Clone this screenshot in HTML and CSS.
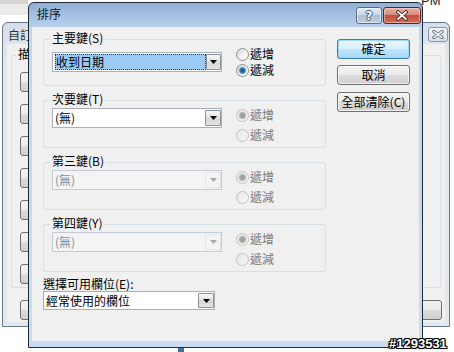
FILE: index.html
```html
<!DOCTYPE html>
<html lang="zh-Hant">
<head>
<meta charset="utf-8">
<title>排序</title>
<link rel="stylesheet" href="styles.css">
</head>
<body>
<div class="screen">
  <div class="topstrip"></div>
  <div class="pm">PM</div>
  <div class="taskbit"></div>

  <div class="bgwin">
    <div class="bg-titlebar">
      <span class="bg-title">自訂檢視</span>
      <span class="bg-close">
        <svg width="12" height="9" viewBox="0 0 12 9"><path d="M2 1.5L10 7.5M10 1.5L2 7.5" stroke="#4a5564" stroke-width="3.2" stroke-linecap="round"/><path d="M2 1.5L10 7.5M10 1.5L2 7.5" stroke="#f4f6f8" stroke-width="1.6" stroke-linecap="round"/></svg>
      </span>
    </div>
    <div class="bg-client">
      <div class="bg-group">
        <span class="bg-legend">描述</span>
        <span class="bg-btn"></span>
        <span class="bg-btn"></span>
        <span class="bg-btn"></span>
        <span class="bg-btn"></span>
        <span class="bg-btn"></span>
        <span class="bg-btn"></span>
        <span class="bg-btn"></span>
      </div>
      <div class="bg-foot">
        <span class="bg-btn"></span>
        <span class="bg-btn wide"></span>
      </div>
    </div>
  </div>

  <div class="dialog">
    <div class="titlebar">
      <span class="title">排序</span>
      <div class="caps">
        <span class="cap help">?</span>
        <span class="cap close">
          <svg width="14" height="11" viewBox="0 0 14 11"><path d="M3 2L11 9M11 2L3 9" stroke="#3b1410" stroke-width="3.6" stroke-linecap="round"/><path d="M3 2L11 9M11 2L3 9" stroke="#ffffff" stroke-width="1.9" stroke-linecap="round"/></svg>
        </span>
      </div>
    </div>
    <div class="client">
      <div class="keys">
        <div class="group first">
          <span class="legend">主要鍵(S)</span>
          <div class="combo">
            <span class="val"><span class="sel">收到日期</span></span>
            <span class="drop"><svg width="7" height="4" viewBox="0 0 7 4"><path d="M0 0H7L3.5 4Z" fill="#000"/></svg></span>
          </div>
          <div class="radios">
            <div class="radio"><span class="dot"></span><span>遞增</span></div>
            <div class="radio"><span class="dot on"></span><span>遞減</span></div>
          </div>
        </div>

        <div class="group">
          <span class="legend">次要鍵(T)</span>
          <div class="combo">
            <span class="val">(無)</span>
            <span class="drop"><svg width="7" height="4" viewBox="0 0 7 4"><path d="M0 0H7L3.5 4Z" fill="#000"/></svg></span>
          </div>
          <div class="radios">
            <div class="radio dis"><span class="dot on"></span><span>遞增</span></div>
            <div class="radio dis"><span class="dot"></span><span>遞減</span></div>
          </div>
        </div>

        <div class="group">
          <span class="legend">第三鍵(B)</span>
          <div class="combo dis">
            <span class="val">(無)</span>
            <span class="drop"><svg width="7" height="4" viewBox="0 0 7 4"><path d="M0 0H7L3.5 4Z" fill="#a9a9a9"/></svg></span>
          </div>
          <div class="radios">
            <div class="radio dis"><span class="dot on"></span><span>遞增</span></div>
            <div class="radio dis"><span class="dot"></span><span>遞減</span></div>
          </div>
        </div>

        <div class="group">
          <span class="legend">第四鍵(Y)</span>
          <div class="combo dis">
            <span class="val">(無)</span>
            <span class="drop"><svg width="7" height="4" viewBox="0 0 7 4"><path d="M0 0H7L3.5 4Z" fill="#a9a9a9"/></svg></span>
          </div>
          <div class="radios">
            <div class="radio dis"><span class="dot on"></span><span>遞增</span></div>
            <div class="radio dis"><span class="dot"></span><span>遞減</span></div>
          </div>
        </div>

        <div class="fields-label">選擇可用欄位(E):</div>
        <div class="combo wide">
          <span class="val">經常使用的欄位</span>
          <span class="drop"><svg width="7" height="4" viewBox="0 0 7 4"><path d="M0 0H7L3.5 4Z" fill="#000"/></svg></span>
        </div>
      </div>

      <div class="buttons">
        <span class="btn default">確定</span>
        <span class="btn">取消</span>
        <span class="btn third">全部清除(C)</span>
      </div>
    </div>
  </div>

  <div class="watermark">#1293531</div>
</div>
</body>
</html>
```

FILE: styles.css
```css
* { box-sizing: border-box; }
html, body { margin: 0; padding: 0; }
body {
  width: 454px;
  height: 352px;
  overflow: hidden;
  background: #ffffff;
  font-family: "Noto Sans CJK TC", "Liberation Sans", sans-serif;
  font-size: 12px;
  line-height: 14px;
  color: #000;
}
.screen { position: relative; width: 454px; height: 352px; overflow: hidden; }

/* background desktop bits */
.topstrip {
  position: absolute; left: 0; top: 0; width: 28px; height: 15px;
  background: linear-gradient(#d4d4d4 0 4px, #ebebeb 4px);
}
.pm {
  position: absolute; left: 421px; top: -6px;
  font: 13px/14px "Liberation Sans", sans-serif; color: #222;
}
.taskbit {
  position: absolute; left: 178px; top: 347px; width: 6px; height: 5px;
  background: #4a6d9c;
}

/* background window */
.bgwin {
  position: absolute; left: 2px; top: 22px; width: 448px; height: 305px;
  border: 1px solid #69778a; border-radius: 6px 6px 0 0;
  background: linear-gradient(#d5dfeb, #e2e8ef 40px, #e2e8ef);
  display: flex; flex-direction: column;
}
.bg-titlebar {
  height: 21px; display: flex; justify-content: space-between; align-items: flex-start;
  padding: 0 1px 0 5px;
}
.bg-title { padding-top: 5px; color: #333; }
.bg-close {
  margin-top: 4px; width: 20px; height: 15px;
  border: 1px solid #8a96a6; border-radius: 3px;
  background: linear-gradient(#f3f6f9, #d6dee7);
  display: flex; align-items: center; justify-content: center;
}
.bg-client {
  flex: 1; margin: 0 4px 4px; background: #f0f0f0;
  padding: 11px 0 0 4px;
}
.bg-group {
  position: relative; height: 233px; margin-right: 4px;
  border: 1px solid #d5dfe5; border-radius: 3px;
  padding: 16px 0 0 8px;
  display: flex; flex-direction: column; gap: 12px;
}
.bg-legend { position: absolute; top: -9px; left: 4px; padding: 0 2px; background: #f0f0f0; }
.bg-btn {
  display: block; width: 60px; height: 20px;
  border: 1px solid #707070; border-radius: 3px;
  background: linear-gradient(#f2f2f2, #ebebeb 50%, #dddddd 50%, #cfcfcf);
}
.bg-btn.wide { width: 75px; }
.bg-foot { display: flex; justify-content: space-between; padding: 12px 3px 0 9px; }

/* dialog */
.dialog {
  position: absolute; left: 28px; top: 2px; width: 395px; height: 346px;
  border: 1px solid #1f2a36; border-radius: 6px 6px 0 0;
  background: linear-gradient(#91afd5, #b8d0ec 24px, #c2d7ee 24px, #cadcf0);
  display: flex; flex-direction: column;
  padding: 0 3px 6px;
}
.titlebar {
  height: 24px; display: flex; justify-content: space-between; align-items: flex-start;
}
.title { padding: 4px 0 0 5px; color: #111; }
.caps { display: flex; gap: 1px; margin-top: 4px; margin-right: -2px; }
.cap {
  height: 17px; border-radius: 3px;
  display: flex; align-items: center; justify-content: center;
}
.help {
  width: 26px; border: 1px solid #5a6e88;
  background: linear-gradient(#e3ebf5, #c5d5e8 50%, #aebfd6 50%, #bccde2);
  box-shadow: inset 0 0 0 1px rgba(255,255,255,.55);
  font: bold 12px/12px "DejaVu Sans", sans-serif; color: #fff;
  text-shadow: 1px 0 #4a5668, -1px 0 #4a5668, 0 1px #4a5668, 0 -1px #4a5668;
}
.close {
  width: 38px; border: 1px solid #5b2620;
  background: linear-gradient(#eab1a6, #d98a7c 45%, #c4503f 50%, #cf6b58);
  box-shadow: inset 0 0 0 1px rgba(255,220,210,.5);
}

.client {
  flex: 1; background: #f0f0f0;
  padding: 12px 0 0 11px;
  display: flex; gap: 11px;
}
.keys { width: 283px; display: flex; flex-direction: column; }
.group {
  position: relative; height: 48px; margin-top: 14px;
  border: 1px solid #d5dfe5; border-radius: 3px;
  display: flex; padding-left: 8px;
}
.group.first { height: 47px; margin-top: 0; }
.legend {
  position: absolute; top: -9px; left: 6px; padding: 0 2px;
  background: #f0f0f0; white-space: nowrap;
}

.combo {
  width: 170px; height: 20px; margin-top: 7px;
  border: 1px solid #a7b0bb; background: #fff;
  display: flex; padding: 1px 0 1px 1px;
}
.group.first .combo { margin-top: 12px; }
.combo .val { flex: 1; padding-left: 1px; line-height: 16px; white-space: nowrap; }
.sel {
  display: block; width: 151px; height: 16px; padding-left: 1px;
  background: #9ccaf3; outline: 1px dotted #2c3a48; outline-offset: -1px;
}
.drop {
  width: 16px; height: 16px; margin-right: 0;
  border: 1px solid #8d939a; border-radius: 1px;
  background: linear-gradient(#f7f7f7, #e3e3e3 50%, #d6d6d6 50%, #e4e4e4);
  display: flex; align-items: center; justify-content: center;
}
.combo.dis { border-color: #c2cbd6; background: #f4f4f4; color: #8c8c8c; }
.combo.dis .drop { border-color: #e2e6ea; background: #f4f4f4; }

.radios { margin-left: 14px; margin-top: 6px; display: flex; flex-direction: column; gap: 4px; }
.group.first .radios { gap: 0; }
.radio { display: flex; align-items: center; gap: 1px; height: 16px; }
.dot {
  width: 13px; height: 13px; border-radius: 50%;
  border: 1px solid #8e8f8f;
  background: linear-gradient(135deg, #cfd2d5, #f3f3f3 55%, #ffffff);
}
.dot.on {
  background:
    radial-gradient(circle at 50% 50%, #1e4f7c 0, #2a6ea8 2px, #5a9ad2 3px, #9cc6ea 3.6px, transparent 4.2px),
    linear-gradient(135deg, #cfd2d5, #f3f3f3 55%, #ffffff);
}
.radio.dis { color: #7a7a7a; }
.radio.dis .dot {
  border-color: #c3c3c3;
  background: linear-gradient(135deg, #e6e6e6, #f7f7f7);
}
.radio.dis .dot.on {
  background:
    radial-gradient(circle, #9a9a9a 0, #a9a9a9 2.5px, #c9c9c9 3.6px, transparent 4.2px),
    linear-gradient(135deg, #e6e6e6, #f7f7f7);
}

.fields-label { margin-top: 5px; white-space: nowrap; }
.combo.wide { width: 172px; height: 19px; margin-top: 0; }
.combo.wide .drop { height: 15px; }

.buttons { width: 73px; display: flex; flex-direction: column; gap: 6px; }
.btn {
  height: 20px; border: 1px solid #707070; border-radius: 3px;
  background: linear-gradient(#f2f2f2, #ebebeb 50%, #dddddd 50%, #cfcfcf);
  box-shadow: inset 0 0 0 1px rgba(255,255,255,.7);
  display: flex; align-items: center; justify-content: center;
  white-space: nowrap;
}
.btn.third { margin-top: 1px; }
.btn.default {
  border-color: #3c7fb1;
  background: linear-gradient(#eaf6fd, #d9f0fc 50%, #bee6fd 50%, #a7d9f5);
  box-shadow: inset 0 0 0 1px #9cdaf7;
}

.watermark {
  position: absolute; left: 389px; top: 337px;
  font: bold 13px/13px "Liberation Sans", sans-serif; color: #fff;
  text-shadow: 1px 0 #000, -1px 0 #000, 0 1px #000, 0 -1px #000,
               1px 1px #000, -1px -1px #000, 1px -1px #000, -1px 1px #000;
}
```
